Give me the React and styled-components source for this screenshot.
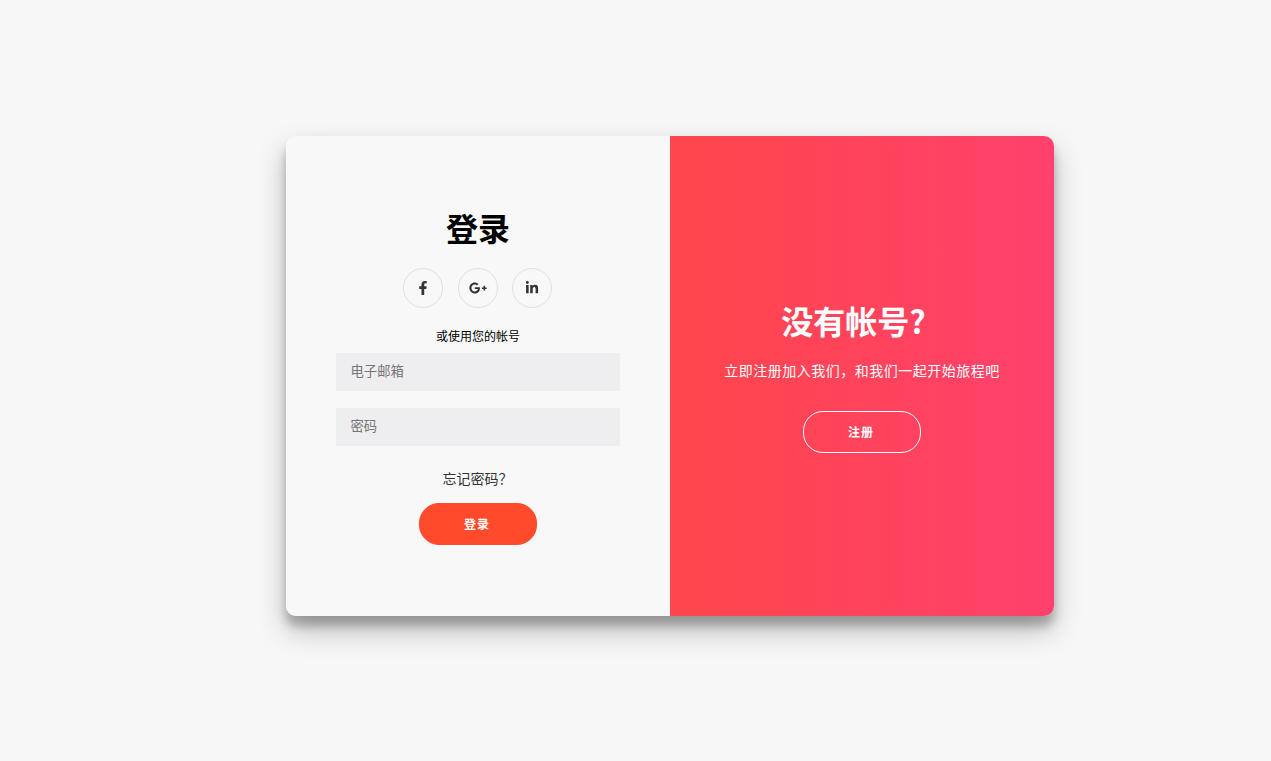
import React from 'react';
import styled, { createGlobalStyle } from 'styled-components';
import { FaFacebookF, FaGooglePlusG, FaLinkedinIn } from 'react-icons/fa';

const FONT = `"Noto Sans CJK SC", "Noto Sans", "Liberation Sans", sans-serif`;

const Global = createGlobalStyle`
  * { box-sizing: border-box; }
  html, body { margin: 0; padding: 0; height: 100%; }
  body { background: #f7f7f8; font-family: ${FONT}; overflow: hidden; }
`;

const Page = styled.main`
  width: 1271px;
  height: 761px;
  padding: 136px 0 0 286px;
`;

const Card = styled.section`
  display: grid;
  grid-template-columns: 384px 384px;
  width: 768px;
  height: 480px;
  border-radius: 10px;
  overflow: hidden;
  background: #f8f8f8;
  box-shadow: 0 14px 28px rgba(0, 0, 0, 0.25), 0 10px 10px rgba(0, 0, 0, 0.22);
`;

const SignInForm = styled.form`
  display: flex;
  flex-direction: column;
  align-items: center;
  justify-content: center;
  padding: 0 50px 4px;
  background: #f8f8f8;
  text-align: center;
`;

const Title = styled.h1`
  margin: 0;
  padding-right: ${p => (p.$light ? '17px' : '0')};
  font-size: 32px;
  line-height: 46px;
  font-weight: 700;
  color: ${p => (p.$light ? '#fff' : '#000')};
`;

const Socials = styled.div`
  display: flex;
  gap: 14.5px;
  margin: 18px 0 19px;
  padding-right: 1px;
`;

const SocialLink = styled.a`
  display: flex;
  align-items: center;
  justify-content: center;
  width: 40px;
  height: 40px;
  border: 1px solid #e0e0e0;
  border-radius: 50%;
  color: #333;
  svg { height: 14px; width: auto; }
`;

const GoogleIcon = styled(FaGooglePlusG)`
  && { width: 18px; height: 18px; }
`;

const Hint = styled.span`
  font-size: 12px;
  line-height: 17px;
  color: #000;
`;

const Field = styled.input`
  display: block;
  width: 100%;
  height: 38px;
  margin-top: ${p => p.$top}px;
  padding: 0 14.5px 2px;
  border: none;
  outline: none;
  background: #eeeef0;
  font-family: ${FONT};
  font-size: 13.33px;
  &::placeholder { color: #757575; opacity: 1; }
`;

const Forgot = styled.a`
  margin: 22px 0 15px;
  padding-right: 1px;
  font-size: 14px;
  line-height: 20px;
  color: #333;
`;

const Button = styled.button`
  width: 118px;
  height: 42px;
  border: 1px solid ${p => (p.$ghost ? '#fff' : '#ff4b2b')};
  border-radius: 20px;
  background: ${p => (p.$ghost ? 'transparent' : '#ff4b2b')};
  color: #fff;
  font-family: ${FONT};
  font-size: 12px;
  font-weight: 700;
  letter-spacing: 1px;
  padding: 0 2px 1px 0;
`;

const Overlay = styled.div`
  display: flex;
  flex-direction: column;
  align-items: center;
  justify-content: center;
  padding: 0 40px 2px;
  background: linear-gradient(to right, #ff4b2b, #ff416c) right / 200% 100% no-repeat;
  color: #fff;
  text-align: center;
`;

const Lead = styled.p`
  margin: 17px 0 31px;
  font-size: 14px;
  line-height: 20px;
  letter-spacing: 0.5px;
  white-space: nowrap;
`;

export default function App() {
  return (
    <>
      <Global />
      <Page>
        <Card>
          <SignInForm onSubmit={e => e.preventDefault()}>
            <Title>登录</Title>
            <Socials>
              <SocialLink><FaFacebookF /></SocialLink>
              <SocialLink><GoogleIcon /></SocialLink>
              <SocialLink><FaLinkedinIn /></SocialLink>
            </Socials>
            <Hint>或使用您的帐号</Hint>
            <Field $top={9} type="email" placeholder="电子邮箱" />
            <Field $top={17} type="password" placeholder="密码" />
            <Forgot>忘记密码？</Forgot>
            <Button>登录</Button>
          </SignInForm>
          <Overlay>
            <Title $light>没有帐号?</Title>
            <Lead>立即注册加入我们，和我们一起开始旅程吧</Lead>
            <Button $ghost>注册</Button>
          </Overlay>
        </Card>
      </Page>
    </>
  );
}
